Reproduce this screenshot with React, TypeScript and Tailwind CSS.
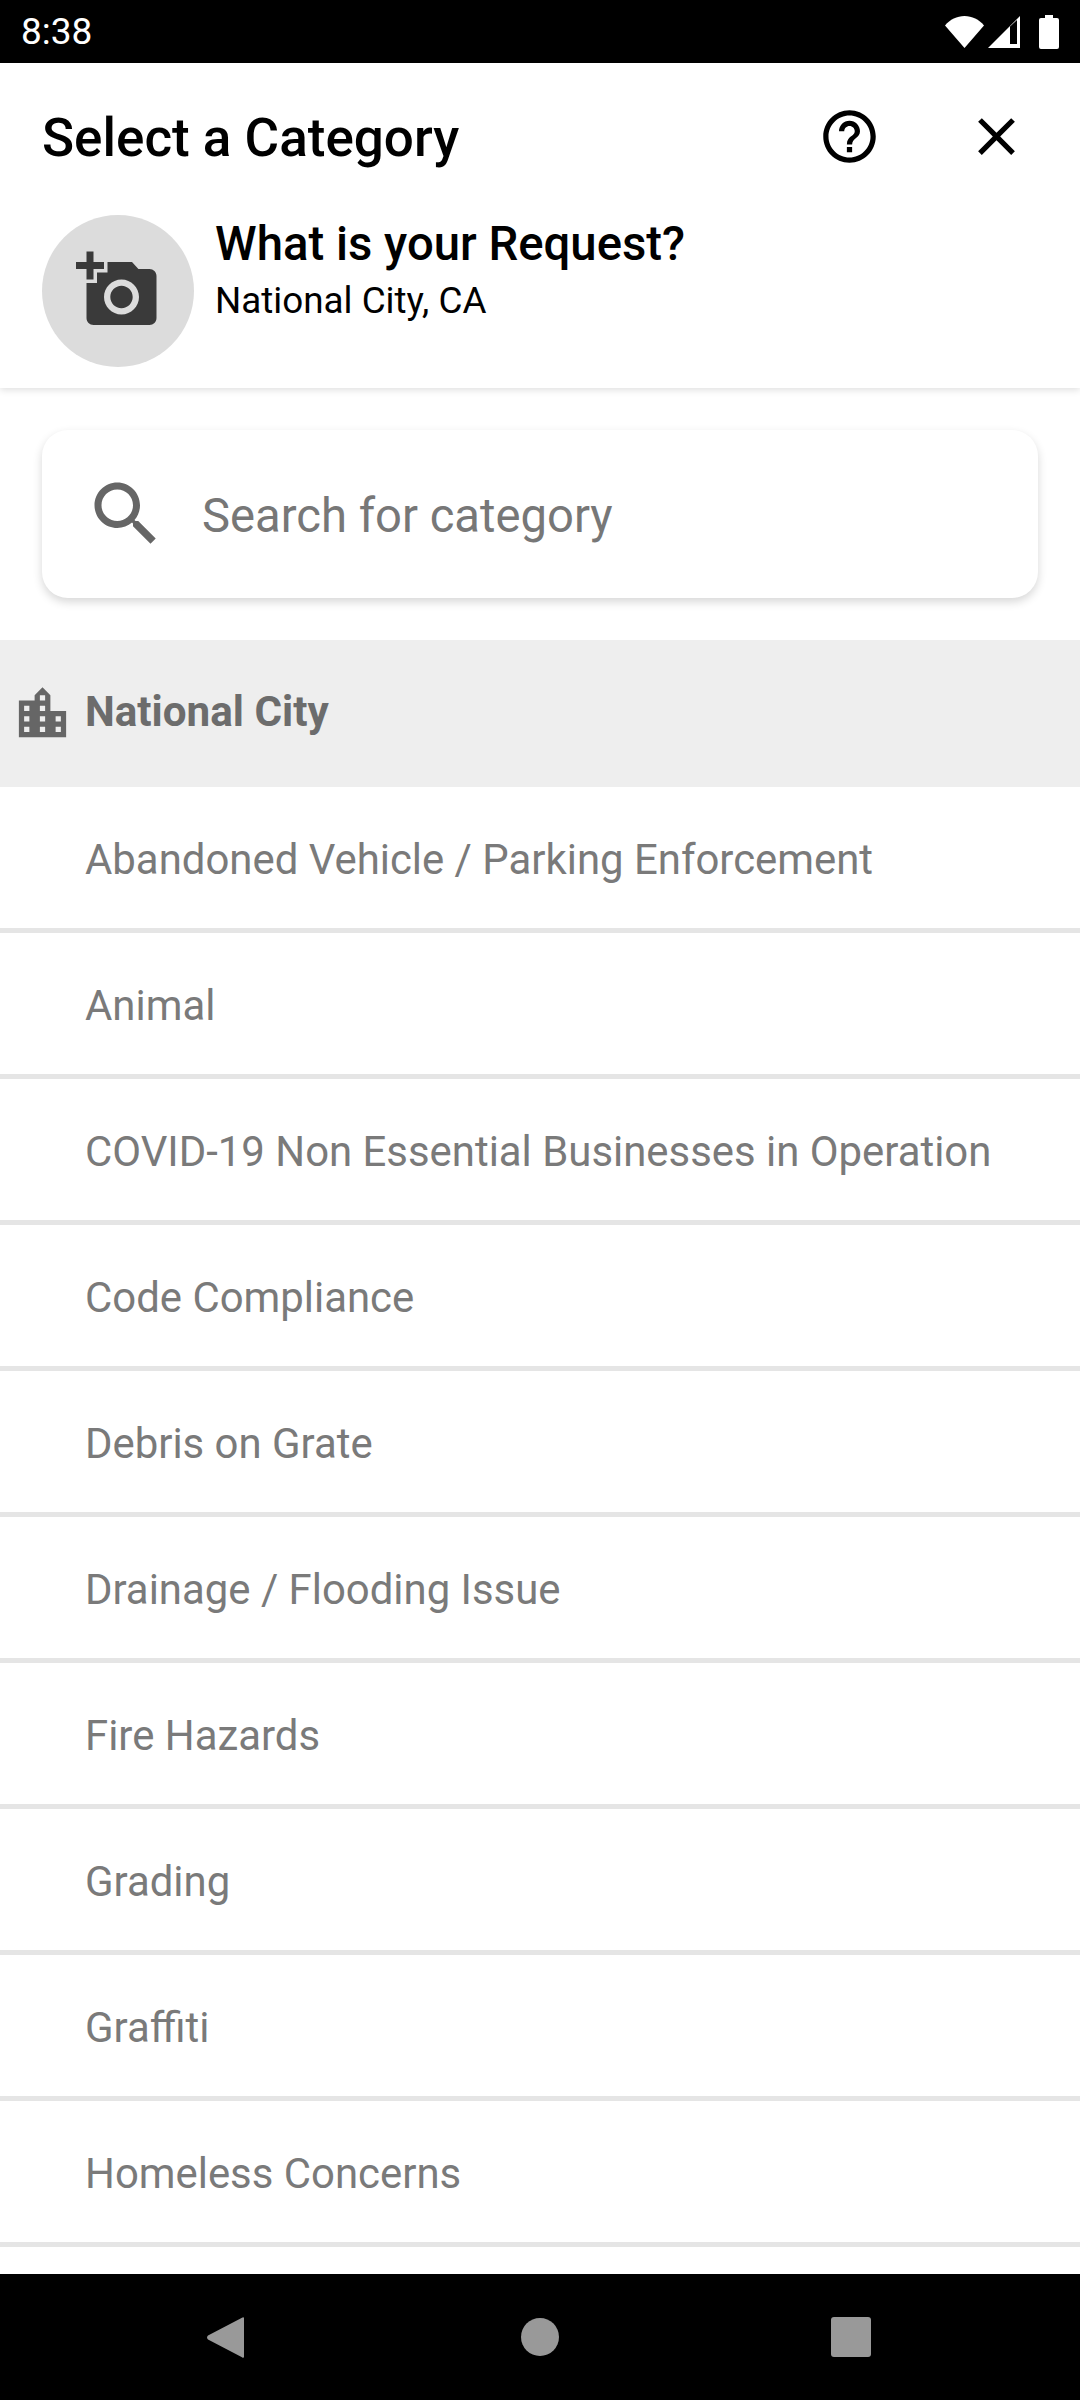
const categories = [
  'Abandoned Vehicle / Parking Enforcement',
  'Animal',
  'COVID-19 Non Essential Businesses in Operation',
  'Code Compliance',
  'Debris on Grate',
  'Drainage / Flooding Issue',
  'Fire Hazards',
  'Grading',
  'Graffiti',
  'Homeless Concerns',
];

function Icon({ d, className }: { d: string; className: string }) {
  return (
    <svg viewBox="0 0 24 24" fill="currentColor" className={className}>
      <path d={d} />
    </svg>
  );
}

const helpPath =
  'M11 18h2v-2h-2v2zm1-16C6.48 2 2 6.48 2 12s4.48 10 10 10 10-4.48 10-10S17.52 2 12 2zm0 18c-4.41 0-8-3.59-8-8s3.59-8 8-8 8 3.59 8 8-3.59 8-8 8zm0-14c-2.21 0-4 1.79-4 4h2c0-1.1.9-2 2-2s2 .9 2 2c0 2-3 1.75-3 5h2c0-2.25 3-2.5 3-5 0-2.21-1.79-4-4-4z';
const closePath =
  'M19 6.41L17.59 5 12 10.59 6.41 5 5 6.41 10.59 12 5 17.59 6.41 19 12 13.41 17.59 19 19 17.59 13.41 12z';
const searchPath =
  'M15.5 14h-.79l-.28-.27C15.41 12.59 16 11.11 16 9.5 16 5.91 13.09 3 9.5 3S3 5.91 3 9.5 5.91 16 9.5 16c1.61 0 3.09-.59 4.23-1.57l.27.28v.79l5 4.99L20.49 19l-4.99-5zm-6 0C7.01 14 5 11.99 5 9.5S7.01 5 9.5 5 14 7.01 14 9.5 11.99 14 9.5 14z';
const addPhotoPath =
  'M3 4V1h2v3h3v2H5v3H3V6H0V4h3zm3 6V7h3V4h7l1.83 2H21c1.1 0 2 .9 2 2v12c0 1.1-.9 2-2 2H5c-1.1 0-2-.9-2-2V10h3zm7 9c2.76 0 5-2.24 5-5s-2.24-5-5-5-5 2.24-5 5 2.24 5 5 5zm-3.2-5c0 1.77 1.43 3.2 3.2 3.2s3.2-1.43 3.2-3.2-1.43-3.2-3.2-3.2-3.2 1.43-3.2 3.2z';
const cityPath =
  'M15 11V5l-3-3-3 3v2H3v14h18V11h-6zm-8 8H5v-2h2v2zm0-4H5v-2h2v2zm0-4H5V9h2v2zm6 8h-2v-2h2v2zm0-4h-2v-2h2v2zm0-4h-2V9h2v2zm0-4h-2V5h2v2zm6 12h-2v-2h2v2zm0-4h-2v-2h2v2z';

export default function App() {
  return (
    <div className="flex h-[2400px] w-[1080px] flex-col overflow-hidden bg-white font-['Roboto',sans-serif]">
      {/* Status bar */}
      <div className="flex h-[63px] shrink-0 items-center justify-between bg-black pl-[21px] pr-[21px] text-white">
        <span className="text-[37px] leading-none">8:38</span>
        <div className="flex items-center">
          <svg viewBox="0 0 39 32" fill="currentColor" className="h-[32px] w-[39px]">
            <path d="M0 9.5C5 3.5 12 0 19.5 0S34 3.5 39 9.5L19.5 32z" />
          </svg>
          <svg viewBox="0 0 32 32" className="ml-[4px] h-[32px] w-[32px]">
            <path fill="#fff" d="M32 0v32H0z" />
            <path fill="#000" d="M22 10.500l7-6.500v24h-7z" />
          </svg>
          <svg viewBox="0 0 20 34" fill="currentColor" className="ml-[19px] h-[34px] w-[20px]">
            <path d="M6 0h8v3h4a2 2 0 0 1 2 2v27a2 2 0 0 1-2 2H2a2 2 0 0 1-2-2V5a2 2 0 0 1 2-2h4z" />
          </svg>
        </div>
      </div>

      {/* Header */}
      <div className="z-10 shrink-0 bg-white pb-[21px] pl-[42px] shadow-[0_2px_7px_rgba(0,0,0,0.13)]">
        <div className="flex h-[146px] items-center">
          <h1 className="flex-1 pt-[5px] text-[53px] font-medium leading-none text-black">Select a Category</h1>
          <Icon d={helpPath} className="h-[63px] w-[63px] text-black" />
          <Icon d={closePath} className="ml-[84px] mr-[52px] h-[63px] w-[63px] text-black" />
        </div>
        <div className="mt-[6px] flex items-start">
          <div className="flex h-[152px] w-[152px] items-center justify-center rounded-full bg-[#dcdcdc]">
            <Icon d={addPhotoPath} className="mb-[2px] h-[84px] w-[84px] text-[#3a3a3a]" />
          </div>
          <div className="ml-[21px]">
            <div className="mt-[6px] text-[47.300px] font-medium leading-[46px] text-black">What is your Request?</div>
            <div className="mt-[12px] text-[36.800px] leading-[44px] text-black">National City, CA</div>
          </div>
        </div>
      </div>

      {/* Search */}
      <div className="shrink-0 px-[42px] py-[42px]">
        <div className="flex h-[168px] items-center rounded-[26px] bg-white pl-[42px] shadow-[0_4px_10px_rgba(0,0,0,0.16)]">
          <Icon d={searchPath} className="h-[84px] w-[84px] text-[#666666]" />
          <span className="ml-[34px] pt-[5px] text-[47.200px] leading-none text-[#777777]">Search for category</span>
        </div>
      </div>

      {/* List */}
      <div className="flex h-[147px] shrink-0 items-center bg-[#eeeeee] pl-[11px]">
        <Icon d={cityPath} className="h-[63px] w-[63px] text-[#666666]" />
        <span className="ml-[11px] pb-[2px] text-[42.200px] font-bold leading-none text-[#6c6c6c]">National City</span>
      </div>
      <div className="min-h-0 flex-1">
        {categories.map((name) => (
          <div
            key={name}
            className="flex h-[146px] items-center border-b-[5px] border-[#e5e5e5] pl-[85px] pt-[5px] text-[41.900px] leading-none text-[#7a7a7a]"
          >
            {name}
          </div>
        ))}
      </div>

      {/* Navigation bar */}
      <div className="flex h-[126px] shrink-0 items-center bg-black pl-[207px]">
        <svg viewBox="0 0 37 41" fill="#999999" className="h-[41px] w-[37px]">
          <path d="M37 1.500v38c0 1.400-1 1.800-2 .8L1 22.500c-1.300-1-1.300-2.800 0-4L35 .7c1-1 2-.6 2 .8z" />
        </svg>
        <div className="ml-[277px] h-[38px] w-[38px] rounded-full bg-[#999999]" />
        <div className="ml-[272px] h-[40px] w-[40px] rounded-[3px] bg-[#999999]" />
      </div>
    </div>
  );
}
